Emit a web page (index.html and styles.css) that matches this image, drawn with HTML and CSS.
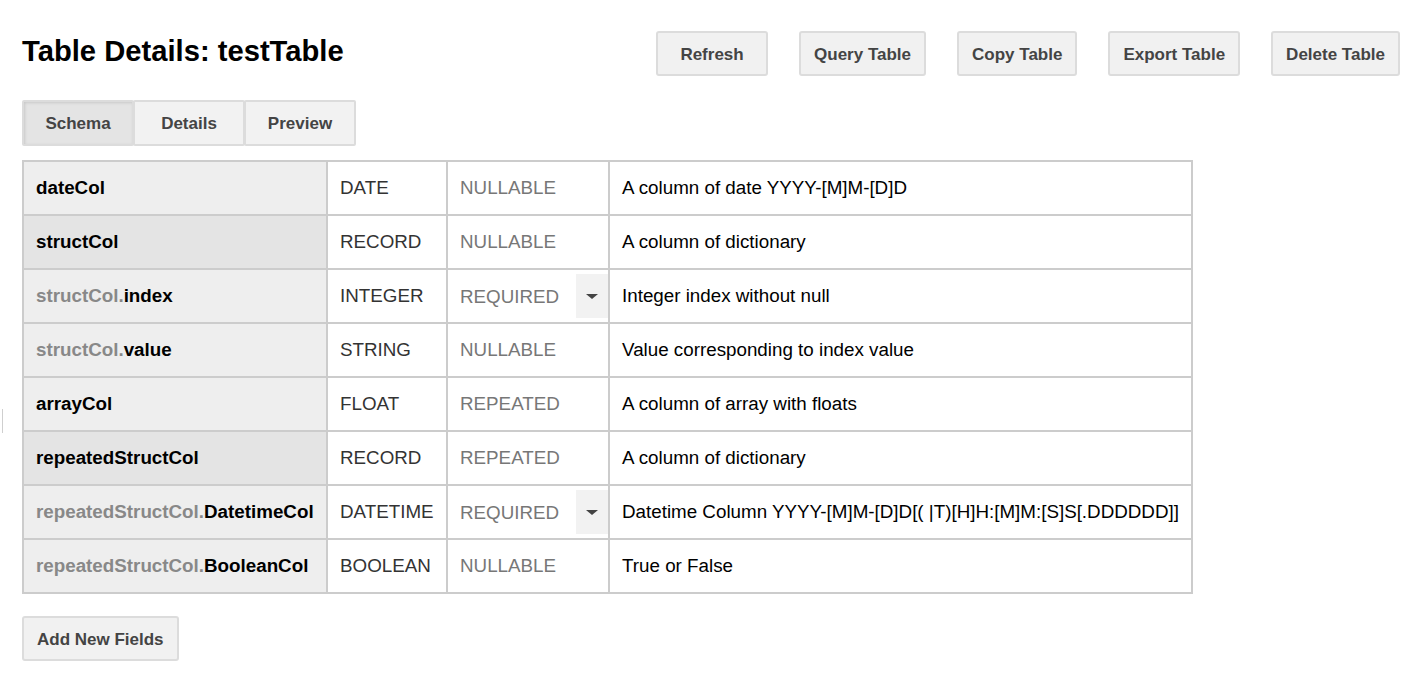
FILE: index.html
```html
<!DOCTYPE html>
<html>
<head>
<meta charset="utf-8">
<link rel="stylesheet" href="styles.css">
</head>
<body>
<div class="page">
  <header class="header">
    <h1 class="title">Table Details: testTable</h1>
    <div class="actions">
      <button class="btn btn-min">Refresh</button>
      <button class="btn">Query Table</button>
      <button class="btn">Copy Table</button>
      <button class="btn">Export Table</button>
      <button class="btn">Delete Table</button>
    </div>
  </header>
  <nav class="tabs">
    <button class="tab active">Schema</button>
    <button class="tab">Details</button>
    <button class="tab">Preview</button>
  </nav>
  <table class="schema">
    <tbody>
      <tr>
        <td class="name">dateCol</td>
        <td class="type">DATE</td>
        <td class="mode">NULLABLE</td>
        <td class="desc">A column of date YYYY-[M]M-[D]D</td>
      </tr>
      <tr class="record">
        <td class="name">structCol</td>
        <td class="type">RECORD</td>
        <td class="mode">NULLABLE</td>
        <td class="desc">A column of dictionary</td>
      </tr>
      <tr>
        <td class="name"><span class="parent">structCol.</span>index</td>
        <td class="type">INTEGER</td>
        <td class="mode"><div class="mode-select"><span>REQUIRED</span><span class="arrow"></span></div></td>
        <td class="desc">Integer index without null</td>
      </tr>
      <tr>
        <td class="name"><span class="parent">structCol.</span>value</td>
        <td class="type">STRING</td>
        <td class="mode">NULLABLE</td>
        <td class="desc">Value corresponding to index value</td>
      </tr>
      <tr>
        <td class="name">arrayCol</td>
        <td class="type">FLOAT</td>
        <td class="mode">REPEATED</td>
        <td class="desc">A column of array with floats</td>
      </tr>
      <tr class="record">
        <td class="name">repeatedStructCol</td>
        <td class="type">RECORD</td>
        <td class="mode">REPEATED</td>
        <td class="desc">A column of dictionary</td>
      </tr>
      <tr>
        <td class="name"><span class="parent">repeatedStructCol.</span>DatetimeCol</td>
        <td class="type">DATETIME</td>
        <td class="mode"><div class="mode-select"><span>REQUIRED</span><span class="arrow"></span></div></td>
        <td class="desc">Datetime Column YYYY-[M]M-[D]D[( |T)[H]H:[M]M:[S]S[.DDDDDD]]</td>
      </tr>
      <tr>
        <td class="name"><span class="parent">repeatedStructCol.</span>BooleanCol</td>
        <td class="type">BOOLEAN</td>
        <td class="mode">NULLABLE</td>
        <td class="desc">True or False</td>
      </tr>
    </tbody>
  </table>
  <button class="btn add">Add New Fields</button>
  <div class="handle"></div>
</div>
</body>
</html>
```

FILE: styles.css
```css
* { box-sizing: border-box; }
html, body { margin: 0; padding: 0; background: #fff; }
body {
  font-family: "Liberation Sans", Arial, sans-serif;
  color: #000;
}
.page {
  position: relative;
  padding: 31px 20px 0 22px;
}
.header {
  display: flex;
  align-items: center;
  justify-content: space-between;
  height: 45px;
}
.title {
  margin: 0;
  font-size: 29.2px;
  font-weight: bold;
  line-height: 1;
  position: relative;
  top: -2px;
}
.actions {
  display: flex;
  gap: 31px;
}
.btn {
  height: 45px;
  padding: 2px 13px 0;
  border: 2px solid #dcdcdc;
  border-radius: 3px;
  background: #f1f1f1;
  color: #444;
  font-family: "Liberation Sans", Arial, sans-serif;
  font-size: 17px;
  font-weight: bold;
  cursor: pointer;
}
.btn-min { min-width: 112px; }
.tabs {
  display: flex;
  margin-top: 24px;
}
.tab {
  width: 112px;
  height: 46px;
  border: 2px solid #dcdcdc;
  border-radius: 2px;
  background: #f2f2f2;
  color: #444;
  font-family: "Liberation Sans", Arial, sans-serif;
  font-size: 17px;
  font-weight: bold;
  padding: 2px 0 0;
}
.tab + .tab { margin-left: -1px; }
.tab.active {
  background: #e4e4e4;
  box-shadow: inset 1px 1px 3px rgba(0,0,0,0.12);
}
.schema {
  margin-top: 14px;
  width: 1171px;
  table-layout: fixed;
  border-collapse: separate;
  border-spacing: 0;
  border-top: 2px solid #cccccc;
  border-left: 2px solid #cccccc;
  font-size: 18.8px;
}
.schema td {
  height: 54px;
  padding: 0 12px;
  border-right: 2px solid #cccccc;
  border-bottom: 2px solid #cccccc;
  vertical-align: middle;
  white-space: nowrap;
}
.schema td.name {
  width: 304px;
  background: #eeeeee;
  font-weight: bold;
  color: #000;
}
.schema tr.record td.name { background: #e4e4e4; }
.parent { color: #888; }
.schema td.type { width: 120px; color: #333; }
.schema td.mode { width: 162px; color: #777; padding-right: 0; }
.schema td.desc { color: #000; }
.mode-select {
  display: flex;
  align-items: center;
  height: 44px;
}
.mode-select span:first-child { position: relative; top: 1px; }
.arrow {
  margin-left: auto;
  width: 32px;
  height: 44px;
  background: #f2f2f2;
  position: relative;
}
.arrow::after {
  content: "";
  position: absolute;
  left: 10px;
  top: 20px;
  border-left: 6px solid transparent;
  border-right: 6px solid transparent;
  border-top: 5px solid #444;
}
.add {
  margin-top: 22px;
}
.handle {
  position: absolute;
  left: 2px;
  top: 409px;
  width: 1px;
  height: 24px;
  background: #cfcfcf;
}
```
